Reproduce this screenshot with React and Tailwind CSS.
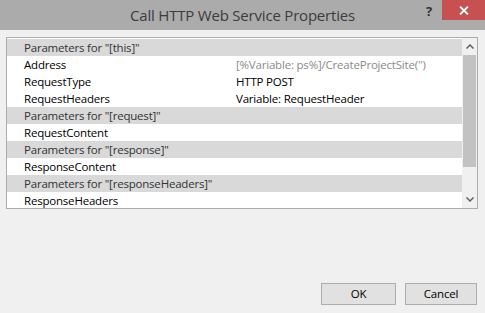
import React from "react";

const rows = [
  { type: "header", label: 'Parameters for "[this]"' },
  { label: "Address", value: "[%Variable: ps%]/CreateProjectSite('')", muted: true },
  { label: "RequestType", value: "HTTP POST" },
  { label: "RequestHeaders", value: "Variable: RequestHeader" },
  { type: "header", label: 'Parameters for "[request]"' },
  { label: "RequestContent" },
  { type: "header", label: 'Parameters for "[response]"' },
  { label: "ResponseContent" },
  { type: "header", label: 'Parameters for "[responseHeaders]"' },
  { label: "ResponseHeaders" },
];

const Row = ({ row }) =>
  row.type === "header" ? (
    <div className="h-[17px] flex items-center bg-[#d9d9d9] pl-[17px] text-[#333333]">
      {row.label}
    </div>
  ) : (
    <div className="h-[17px] flex items-center pl-[17px] text-black">
      <span className="w-[212px] shrink-0">{row.label}</span>
      <span className={row.muted ? "text-[#8a8a8a]" : "text-black"}>
        {row.value}
      </span>
    </div>
  );

export default function App() {
  return (
    <div
      className="w-[485px] h-[313px] bg-[#f0f0f0] flex flex-col overflow-hidden"
      style={{ fontFamily: '"Open Sans", "Noto Sans", sans-serif' }}
    >
      {/* Title bar */}
      <div className="relative h-[30px] shrink-0 bg-[#ababab] flex items-center justify-center">
        <span className="text-[15px] text-[#3c3c3c] tracking-[-0.2px]">
          Call HTTP Web Service Properties
        </span>
        <span className="absolute left-[426px] top-[2px] text-[13px] font-bold text-[#333]">
          ?
        </span>
        <div className="absolute right-0 top-0 w-[43px] h-[20px] bg-[#c75050] flex items-center justify-center">
          <svg width="10" height="9" viewBox="0 0 10 9">
            <path d="M1 0.5L9 8.5M9 0.5L1 8.5" stroke="white" strokeWidth="1.8" />
          </svg>
        </div>
      </div>

      {/* List box */}
      <div className="mt-[7px] ml-[6px] w-[472px] h-[172px] border border-[#acacac] bg-white flex text-[11.5px] tracking-[-0.2px] leading-none">
        <div className="flex-1 pt-px">
          {rows.map((r, i) => (
            <Row key={i} row={r} />
          ))}
        </div>
        <div className="w-[15px] shrink-0 bg-[#f0f0f0] flex flex-col">
          <div className="h-[17px] flex items-center justify-center">
            <svg width="8" height="5" viewBox="0 0 8 5">
              <path d="M0.5 4.5L4 1L7.5 4.5" fill="none" stroke="#606060" strokeWidth="1.5" />
            </svg>
          </div>
          <div className="h-[112px] mx-px bg-[#c2c2c2]" />
          <div className="flex-1" />
          <div className="h-[17px] flex items-center justify-center">
            <svg width="8" height="5" viewBox="0 0 8 5">
              <path d="M0.5 0.5L4 4L7.5 0.5" fill="none" stroke="#606060" strokeWidth="1.5" />
            </svg>
          </div>
        </div>
      </div>

      {/* Buttons */}
      <div className="flex justify-end gap-[9px] mt-[74px] mr-[8px] text-[11.5px] tracking-[-0.2px]">
        <button className="w-[75px] h-[22px] bg-[#e1e1e1] border border-[#adadad] text-black">
          OK
        </button>
        <button className="w-[72px] h-[22px] bg-[#e1e1e1] border border-[#adadad] text-black">
          Cancel
        </button>
      </div>
    </div>
  );
}
